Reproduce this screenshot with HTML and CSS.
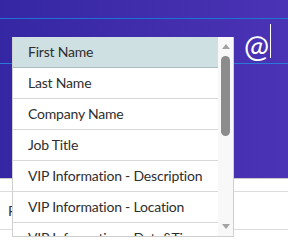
FILE: index.html
```html
<!DOCTYPE html>
<html lang="en">
<head>
  <meta charset="UTF-8" />
  <meta name="viewport" content="width=device-width, initial-scale=1.0"/>
  <title>Mention picker</title>
  <link rel="stylesheet" href="styles.css">
</head>
<body>

  <div class="hero">
    <div class="topbar"></div>
    <div class="field">
      <span class="at">@</span>
      <span class="caret"></span>
    </div>
  </div>

  <div class="rows">
    <div class="row"></div>
    <div class="row tall">F</div>
  </div>

  <div class="dropdown">
    <ul class="list">
      <li class="active">First Name</li>
      <li>Last Name</li>
      <li>Company Name</li>
      <li>Job Title</li>
      <li>VIP Information - Description</li>
      <li>VIP Information - Location</li>
      <li>VIP Information - Date&amp;Time</li>
    </ul>
    <div class="scrollbar">
      <span class="arrow up"></span>
      <span class="thumb"></span>
      <span class="arrow down"></span>
    </div>
  </div>

</body>
</html>
```

FILE: styles.css
```css
* {
  margin: 0;
  padding: 0;
  box-sizing: border-box;
}

body {
  font-family: 'Lato', 'Liberation Sans', sans-serif;
  background: #fff;
  color: #333;
  width: 288px;
  height: 241px;
  overflow: hidden;
  position: relative;
}

.hero {
  height: 179px;
  background: linear-gradient(to right, #3527a3, #4b33b5);
  border-bottom: 1px solid #c9c9c9;
}

.topbar {
  height: 19px;
  border-bottom: 1px solid #1d72d4;
}

.field {
  height: 45px;
  display: flex;
  justify-content: flex-end;
  align-items: flex-end;
  padding-right: 17px;
  padding-bottom: 3px;
  border-bottom: 1px solid #2a78d8;
}

.at {
  color: #fff;
  font-size: 30px;
  line-height: 1;
}

.caret {
  width: 1px;
  height: 34px;
  background: #fff;
  margin-left: 1px;
  margin-bottom: 2px;
}

.row {
  height: 13px;
  border-bottom: 1px solid #ddd;
}

.row.tall {
  height: 38px;
  padding: 10px 0 0 8px;
  font-size: 14px;
}

.dropdown {
  position: absolute;
  left: 12px;
  top: 37px;
  width: 222px;
  height: 200px;
  display: flex;
  background: #fff;
  border: 1px solid #cfcfcf;
  border-top: none;
}

.list {
  list-style: none;
  flex: 1;
  overflow: hidden;
}

.list li {
  height: 31px;
  line-height: 30px;
  padding-left: 15px;
  font-size: 14px;
  letter-spacing: -0.2px;
  color: #2e2e2e;
  border-bottom: 1px solid #d9d9d9;
  white-space: nowrap;
}

.list li.active {
  background: #cfe0e3;
  border-bottom-color: #a9bcbf;
}

.scrollbar {
  width: 15px;
  background: #f8f8f8;
  display: flex;
  flex-direction: column;
  align-items: center;
  padding: 7px 0 7px;
}

.arrow {
  width: 0;
  height: 0;
  border-left: 4.5px solid transparent;
  border-right: 4.5px solid transparent;
}

.arrow.up {
  border-bottom: 5px solid #a3a3a3;
}

.arrow.down {
  margin-top: auto;
  border-top: 5px solid #a3a3a3;
}

.thumb {
  width: 9px;
  height: 80px;
  margin-top: 7px;
  border-radius: 5px;
  background: #8c8c8c;
}
```
